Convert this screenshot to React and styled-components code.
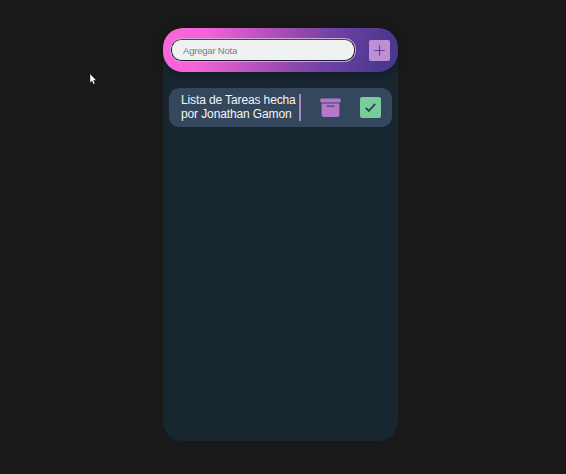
import React from "react";
import styled, { createGlobalStyle } from "styled-components";

const GlobalStyle = createGlobalStyle`
  * { box-sizing: border-box; }
  html, body { margin: 0; background: #191919; overflow: hidden; }
  body, input, button { font-family: "Liberation Sans", Arial, sans-serif; }
`;

const Page = styled.main`
  height: 474px;
  padding: 28px 0 0 163px;
  background: #191919;
`;

const Panel = styled.section`
  width: 235px;
  height: 413px;
  border-radius: 20px;
  background: #182630;
`;

const Header = styled.form`
  display: flex;
  align-items: center;
  justify-content: space-between;
  height: 44px;
  padding: 0 8px;
  border-radius: 20px;
  background: linear-gradient(108deg, #fc66dc 0%, #f562d9 18%, #b04fb8 45%, #7242a5 68%, #48388e 94%);
  box-shadow: 0 2px 7px rgba(8, 16, 24, 0.5);
`;

const NoteInput = styled.input`
  width: 184px;
  height: 22px;
  padding: 0 11px;
  border: 1px solid #17152c;
  border-top-color: #4b4650;
  border-radius: 10px;
  outline: 1px solid #cba9d3;
  background: #f0f2f1;
  font-size: 9.5px;
  letter-spacing: -0.2px;
  &::placeholder { color: #777d80; opacity: 1; }
`;

const IconButton = styled.button`
  display: flex;
  align-items: center;
  justify-content: center;
  flex: none;
  width: 21px;
  height: 21px;
  padding: 0;
  border: 0;
  border-radius: 2px;
  color: ${({ $color }) => $color};
  background: ${({ $fill }) => $fill};
`;

const Note = styled.article`
  display: flex;
  align-items: center;
  height: 39px;
  margin: 16px 6px 0;
  padding: 0 11px 0 12px;
  border-radius: 10px;
  background: #34475d;
`;

const NoteText = styled.p`
  width: 120px;
  height: 27px;
  margin: 0;
  border-right: 2px solid #a58bbb;
  color: #f3f6f8;
  font-size: 12px;
  letter-spacing: -0.12px;
  line-height: 13.5px;
  white-space: nowrap;
`;

const Actions = styled.div`
  display: flex;
  flex: 1;
  justify-content: space-between;
  padding-left: 19px;
`;

const Cursor = styled.svg`
  position: absolute;
  left: 89px;
  top: 73px;
`;

export default function App() {
  return (
    <Page>
      <GlobalStyle />
      <Panel>
        <Header>
          <NoteInput placeholder="Agregar Nota" />
          <IconButton type="button" aria-label="Agregar" $fill="#bd8fd3" $color="#67439d">
            <svg width="21" height="21" viewBox="0 0 21 21" fill="none" stroke="currentColor" strokeWidth="1.2">
              <path d="M10.5 5.2v10.6M5.2 10.5h10.6" />
            </svg>
          </IconButton>
        </Header>
        <Note>
          <NoteText>Lista de Tareas hecha<br />por Jonathan Gamon</NoteText>
          <Actions>
            <IconButton aria-label="Archivar" $fill="transparent" $color="#b577c9">
              <svg width="21" height="21" viewBox="0 0 21 21">
                <path fill="currentColor" d="M1 1.5h19q.6 0 .6.6v2.7q0 .6-.6.6H1q-.6 0-.6-.6V2.1q0-.6.6-.6ZM1.6 6.4h17.8v11.1q0 2.5-2.5 2.5H4.1q-2.5 0-2.5-2.5Z" />
                <path d="M7.2 9.2h6.9" stroke="#55406f" strokeWidth="1.3" strokeLinecap="round" />
              </svg>
            </IconButton>
            <IconButton aria-label="Completar" $fill="#7acb9d" $color="#28434e">
              <svg width="21" height="21" viewBox="0 0 21 21" fill="none" stroke="currentColor" strokeWidth="1.8">
                <path d="m5.7 10.8 3.2 3.2 6.3-7.1" />
              </svg>
            </IconButton>
          </Actions>
        </Note>
      </Panel>
      <Cursor width="9" height="13" viewBox="0 0 9 13">
        <path d="M1 .7v9l2-1.8 1.4 3.3 1.6-.7-1.4-3.2h2.7Z" fill="#fff" stroke="#080808" strokeWidth=".4" />
      </Cursor>
    </Page>
  );
}
